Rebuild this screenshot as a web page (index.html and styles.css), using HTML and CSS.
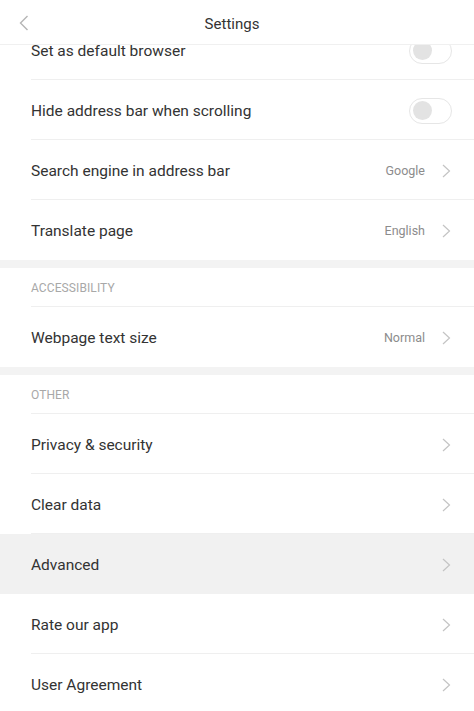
FILE: index.html
```html
<!DOCTYPE html>
<html lang="en">
<head>
  <meta charset="UTF-8">
  <meta name="viewport" content="width=device-width, initial-scale=1.0">
  <title>Settings</title>
  <link rel="stylesheet" href="styles.css">
</head>
<body>
  <div class="screen">
    <!-- Top bar -->
    <header class="topbar">
      <button class="back" aria-label="Back">
        <svg width="10" height="16" viewBox="0 0 10 16"><path d="M8.5 1 L1.5 8 L8.5 15" fill="none" stroke="#b5b5b5" stroke-width="1.4"/></svg>
      </button>
      <div class="title">Settings</div>
    </header>

    <div class="scroller">
      <div class="list">
        <div class="row">
          <span class="label">Set as default browser</span>
          <span class="toggle"><span class="knob"></span></span>
        </div>
        <div class="row">
          <span class="label">Hide address bar when scrolling</span>
          <span class="toggle"><span class="knob"></span></span>
        </div>
        <div class="row">
          <span class="label">Search engine in address bar</span>
          <span class="value">Google</span>
          <svg class="chev" width="9" height="14" viewBox="0 0 9 14"><path d="M1 1 L7.5 7 L1 13" fill="none" stroke="#c4c4c4" stroke-width="1.2"/></svg>
        </div>
        <div class="row last">
          <span class="label">Translate page</span>
          <span class="value">English</span>
          <svg class="chev" width="9" height="14" viewBox="0 0 9 14"><path d="M1 1 L7.5 7 L1 13" fill="none" stroke="#c4c4c4" stroke-width="1.2"/></svg>
        </div>
      </div>

      <div class="gap"></div>

      <div class="list">
        <div class="section-title">ACCESSIBILITY</div>
        <div class="row last">
          <span class="label">Webpage text size</span>
          <span class="value">Normal</span>
          <svg class="chev" width="9" height="14" viewBox="0 0 9 14"><path d="M1 1 L7.5 7 L1 13" fill="none" stroke="#c4c4c4" stroke-width="1.2"/></svg>
        </div>
      </div>

      <div class="gap"></div>

      <div class="list">
        <div class="section-title">OTHER</div>
        <div class="row">
          <span class="label">Privacy &amp; security</span>
          <svg class="chev" width="9" height="14" viewBox="0 0 9 14"><path d="M1 1 L7.5 7 L1 13" fill="none" stroke="#c4c4c4" stroke-width="1.2"/></svg>
        </div>
        <div class="row">
          <span class="label">Clear data</span>
          <svg class="chev" width="9" height="14" viewBox="0 0 9 14"><path d="M1 1 L7.5 7 L1 13" fill="none" stroke="#c4c4c4" stroke-width="1.2"/></svg>
        </div>
        <div class="row pressed">
          <span class="label">Advanced</span>
          <svg class="chev" width="9" height="14" viewBox="0 0 9 14"><path d="M1 1 L7.5 7 L1 13" fill="none" stroke="#c4c4c4" stroke-width="1.2"/></svg>
        </div>
        <div class="row">
          <span class="label">Rate our app</span>
          <svg class="chev" width="9" height="14" viewBox="0 0 9 14"><path d="M1 1 L7.5 7 L1 13" fill="none" stroke="#c4c4c4" stroke-width="1.2"/></svg>
        </div>
        <div class="row last">
          <span class="label">User Agreement</span>
          <svg class="chev" width="9" height="14" viewBox="0 0 9 14"><path d="M1 1 L7.5 7 L1 13" fill="none" stroke="#c4c4c4" stroke-width="1.2"/></svg>
        </div>
      </div>
    </div>
  </div>
</body>
</html>
```

FILE: styles.css
```css
* {
  margin: 0;
  padding: 0;
  box-sizing: border-box;
}

body {
  font-family: Roboto, "Noto Sans", Arial, sans-serif;
  background-color: #ffffff;
  color: #333333;
}

.screen {
  height: 711px;
  display: flex;
  flex-direction: column;
  overflow: hidden;
}

/* Top bar */
.topbar {
  flex: 0 0 45px;
  display: flex;
  align-items: center;
  justify-content: center;
  position: relative;
  background-color: #ffffff;
  border-bottom: 1px solid #f0f0f0;
  padding-top: 3px;
  z-index: 1;
}

.back {
  position: absolute;
  left: 19px;
  top: 15px;
  background: none;
  border: none;
  display: flex;
}

.title {
  font-size: 15px;
  color: #333;
  margin-left: -10px;
}

/* Scrolled content, first row sits partly under the bar */
.scroller {
  flex: 1;
  overflow: hidden;
}

.scroller > .list:first-child {
  margin-top: -25px;
}

.list {
  background-color: #ffffff;
}

.gap {
  height: 8px;
  background-color: #f3f3f3;
}

.section-title {
  height: 39px;
  display: flex;
  align-items: center;
  padding-left: 31px;
  font-size: 12px;
  color: #a8a8a8;
  letter-spacing: 0.1px;
  position: relative;
}

.section-title::after,
.row::after {
  content: "";
  position: absolute;
  left: 31px;
  right: 0;
  bottom: 0;
  border-bottom: 1px solid #efefef;
}

.row {
  height: 60px;
  display: flex;
  align-items: center;
  padding: 1px 22px 0 31px;
  position: relative;
}

.row.last::after {
  display: none;
}

.row.pressed {
  background-color: #f1f1f1;
}

.row.pressed::after {
  display: none;
}

.label {
  flex: 1;
  font-size: 15.5px;
  color: #333;
}

.value {
  font-size: 12.5px;
  color: #8c8c8c;
  margin-right: 17px;
}

.chev {
  display: block;
  margin-right: 1px;
}

/* Switch, off state */
.toggle {
  width: 43px;
  height: 26px;
  border: 1px solid #e6e6e6;
  border-radius: 13px;
  background-color: #ffffff;
  display: flex;
  align-items: center;
  padding-left: 3px;
}

.knob {
  width: 19px;
  height: 19px;
  border-radius: 50%;
  background-color: #e3e3e3;
}
```
